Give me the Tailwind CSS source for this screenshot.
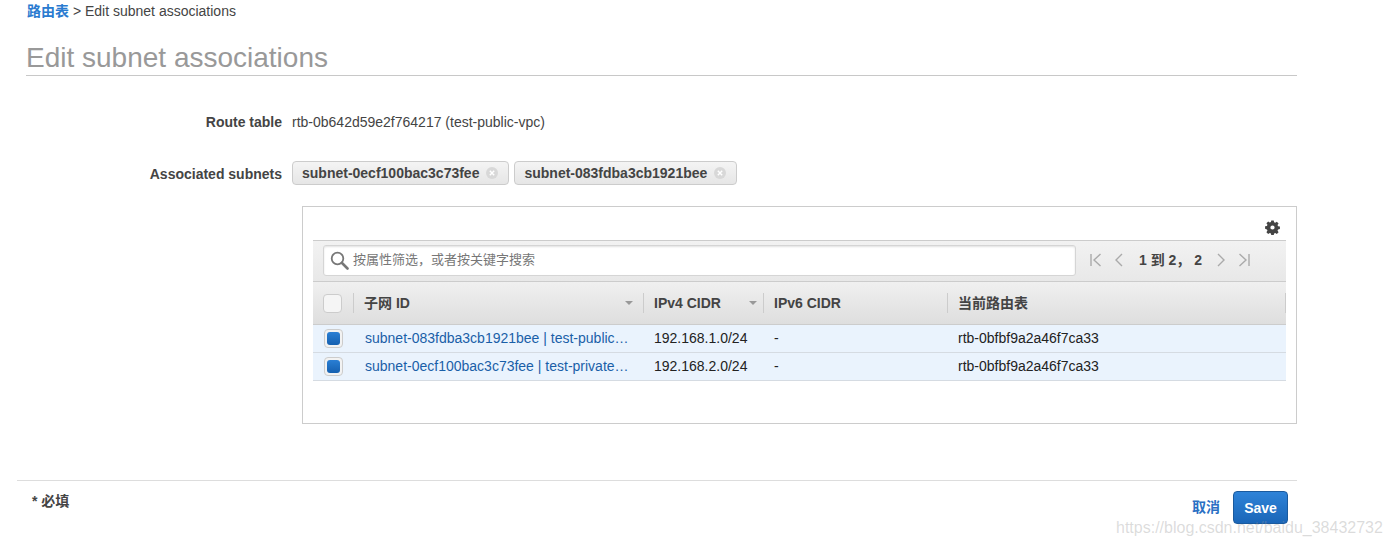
<!DOCTYPE html>
<html lang="en">

<head>
    <meta charset="UTF-8">
    <title>Edit subnet associations</title>
    <script src="https://cdn.jsdelivr.net/npm/@tailwindcss/browser@4"></script>
</head>

<body class="bg-white">
    <div class="relative w-[1391px] h-[546px] overflow-hidden bg-white text-[14px] leading-[16px] text-[#444] font-['Liberation_Sans','Noto_Sans_CJK_SC',sans-serif]">
        <div class="pl-[26px] pr-[94px]">
            <div class="pt-[3px] pl-[1px] h-[22px]"><a class="text-[#2a7bd0] font-bold">路由表</a> &gt; Edit subnet associations</div>
            <h1 class="mt-[20px] h-[34px] border-b border-[#c8c8c8] text-[28px] leading-[32px] text-[#999]">Edit subnet associations</h1>
        </div>

        <div class="mt-[38px] flex items-center h-[16px]">
            <div class="w-[282px] text-right font-bold">Route table</div>
            <div class="ml-[10px]">rtb-0b642d59e2f764217 (test-public-vpc)</div>
        </div>

        <div class="mt-[31px] flex items-center h-[24px]">
            <div class="w-[282px] mt-[2px] text-right font-bold">Associated subnets</div>
            <div class="ml-[10px] flex gap-[5px]">
                <div class="flex items-center h-[24px] pl-[9px] pr-[10px] gap-[7px] rounded-[4px] border border-[#ccc] bg-gradient-to-b from-[#f4f4f4] to-[#e6e6e6] font-bold">
                    subnet-0ecf100bac3c73fee
                    <svg width="12" height="12" viewBox="0 0 12 12"><circle cx="6" cy="6" r="6" fill="#d8d8d8" /><path d="M3.8 3.8l4.4 4.4M8.2 3.8l-4.4 4.4" stroke="#fff" stroke-width="1.4" /></svg>
                </div>
                <div class="flex items-center h-[24px] pl-[9px] pr-[10px] gap-[7px] rounded-[4px] border border-[#ccc] bg-gradient-to-b from-[#f4f4f4] to-[#e6e6e6] font-bold">
                    subnet-083fdba3cb1921bee
                    <svg width="12" height="12" viewBox="0 0 12 12"><circle cx="6" cy="6" r="6" fill="#d8d8d8" /><path d="M3.8 3.8l4.4 4.4M8.2 3.8l-4.4 4.4" stroke="#fff" stroke-width="1.4" /></svg>
                </div>
            </div>
        </div>

        <div class="ml-[302px] mt-[21px] w-[995px] h-[218px] border border-[#ccc] px-[10px]">
            <div class="h-[33px] flex justify-end items-center pr-[6px] pt-[8px]">
                <svg width="15" height="15" viewBox="-0.5 -0.5 17 17" fill="#444">
                    <path fill-rule="evenodd" d="M6.6 0h2.8l.4 2.1 1.3.6 1.8-1.2 2 2-1.2 1.8.6 1.3 2.1.4v2.8l-2.1.4-.6 1.3 1.2 1.8-2 2-1.8-1.2-1.3.6-.4 2.1H6.6l-.4-2.1-1.3-.6-1.8 1.2-2-2 1.2-1.8-.6-1.3L-.4 9.4V6.6l2.1-.4.6-1.3-1.2-1.8 2-2 1.8 1.2 1.3-.6zM8 5.6a2.4 2.4 0 1 0 0 4.8 2.4 2.4 0 0 0 0-4.8z" />
                </svg>
            </div>

            <div class="h-[42px] flex items-center border-t border-b border-[#ccc] bg-gradient-to-b from-[#f2f2f2] to-[#e8e8e8] pl-[10px] pb-[2px]">
                <div class="flex items-center w-[753px] h-[31px] bg-white border border-[#d5d5d5] rounded-[3px] shadow-[inset_0_1px_2px_rgba(0,0,0,0.12)] pl-[6px] text-[13px] text-[#777]">
                    <svg width="19" height="19" viewBox="0 0 19 19" fill="none" stroke="#777">
                        <circle cx="7.5" cy="7.5" r="5.8" stroke-width="1.8" />
                        <path d="M12 12l5.5 5.5" stroke-width="2.6" stroke-linecap="round" />
                    </svg>
                    <span class="ml-[4px]">按属性筛选，或者按关键字搜索</span>
                </div>
                <div class="ml-[14px] flex items-center text-[#444]">
                    <svg width="12" height="14" viewBox="0 0 12 14" fill="none" stroke="#aaa" stroke-width="1.4"><path d="M1 1v12M10.5 1L4 7l6.5 6" /></svg>
                    <svg class="ml-[12px]" width="10" height="14" viewBox="0 0 10 14" fill="none" stroke="#aaa" stroke-width="1.4"><path d="M8 1L2 7l6 6" /></svg>
                    <span class="ml-[15px] font-bold whitespace-pre">1 到 2， 2</span>
                    <svg class="ml-[14px]" width="10" height="14" viewBox="0 0 10 14" fill="none" stroke="#aaa" stroke-width="1.4"><path d="M2 1l6 6-6 6" /></svg>
                    <svg class="ml-[12px]" width="12" height="14" viewBox="0 0 12 14" fill="none" stroke="#aaa" stroke-width="1.4"><path d="M11 1v12M1.5 1L8 7l-6.5 6" /></svg>
                </div>
            </div>

            <div class="h-[43px] grid grid-cols-[40px_290px_120px_184px_339px] items-center border-b border-[#ccc] bg-gradient-to-b from-[#f0f0f0] to-[#dedede] font-bold">
                <div class="pl-[10px] h-[20px] flex items-center">
                    <div class="w-[19px] h-[19px] rounded-[4px] border border-[#ccc] bg-[#f5f5f5]"></div>
                </div>
                <div class="h-[20px] border-l border-[#ccc] pl-[10px] pt-[2px] flex justify-between pr-[10px]">
                    子网 ID
                    <span class="mt-[6px] w-0 h-0 border-x-[4px] border-t-[4px] border-x-transparent border-t-[#999]"></span>
                </div>
                <div class="h-[20px] border-l border-[#ccc] pl-[10px] pt-[2px] flex justify-between pr-[6px]">
                    IPv4 CIDR
                    <span class="mt-[6px] w-0 h-0 border-x-[4px] border-t-[4px] border-x-transparent border-t-[#999]"></span>
                </div>
                <div class="h-[20px] border-l border-[#ccc] pl-[10px] pt-[2px]">IPv6 CIDR</div>
                <div class="h-[20px] border-x border-[#ccc] pl-[10px] pt-[2px]">当前路由表</div>
            </div>

            <div class="h-[28px] pb-[1px] grid grid-cols-[41px_289px_120px_185px_338px] items-center border-b border-[#d5dbe2] bg-[#eaf3fd] text-[#222]">
                <div class="pl-[11px]">
                    <div class="w-[19px] h-[19px] rounded-[4px] border border-[#ccc] bg-[#f2f2f2] p-[2px]"><div class="w-full h-full rounded-[3px] bg-gradient-to-b from-[#2a7fd4] to-[#1560b0]"></div></div>
                </div>
                <div class="pl-[11px] pr-[10px] truncate text-[#1a5fa8]">subnet-083fdba3cb1921bee | test-public-subnet</div>
                <div class="pl-[11px]">192.168.1.0/24</div>
                <div class="pl-[11px]">-</div>
                <div class="pl-[10px]">rtb-0bfbf9a2a46f7ca33</div>
            </div>
            <div class="h-[28px] pb-[1px] grid grid-cols-[41px_289px_120px_185px_338px] items-center border-b border-[#d5dbe2] bg-[#eaf3fd] text-[#222]">
                <div class="pl-[11px]">
                    <div class="w-[19px] h-[19px] rounded-[4px] border border-[#ccc] bg-[#f2f2f2] p-[2px]"><div class="w-full h-full rounded-[3px] bg-gradient-to-b from-[#2a7fd4] to-[#1560b0]"></div></div>
                </div>
                <div class="pl-[11px] pr-[10px] truncate text-[#1a5fa8]">subnet-0ecf100bac3c73fee | test-private-subnet</div>
                <div class="pl-[11px]">192.168.2.0/24</div>
                <div class="pl-[11px]">-</div>
                <div class="pl-[10px]">rtb-0bfbf9a2a46f7ca33</div>
            </div>
        </div>

        <div class="ml-[17px] mt-[56px] w-[1280px] border-t border-[#ddd] flex justify-between">
            <div class="pl-[15px] pt-[12px] font-bold">* 必填</div>
            <div class="pt-[10px] pr-[9px] flex items-center h-[43px]">
                <a class="mr-[13px] mb-[1px] text-[#2a6fc4] font-bold">取消</a>
                <button class="w-[55px] h-[33px] rounded-[4px] border border-[#1a5a9e] bg-gradient-to-b from-[#2e83d8] to-[#1a66b8] text-white font-bold">Save</button>
            </div>
        </div>

        <div class="absolute left-[1116px] top-[518px] text-[16px] leading-[20px] text-[#999]/35 whitespace-nowrap">https://blog.csdn.net/baidu_38432732</div>
    </div>
</body>

</html>
